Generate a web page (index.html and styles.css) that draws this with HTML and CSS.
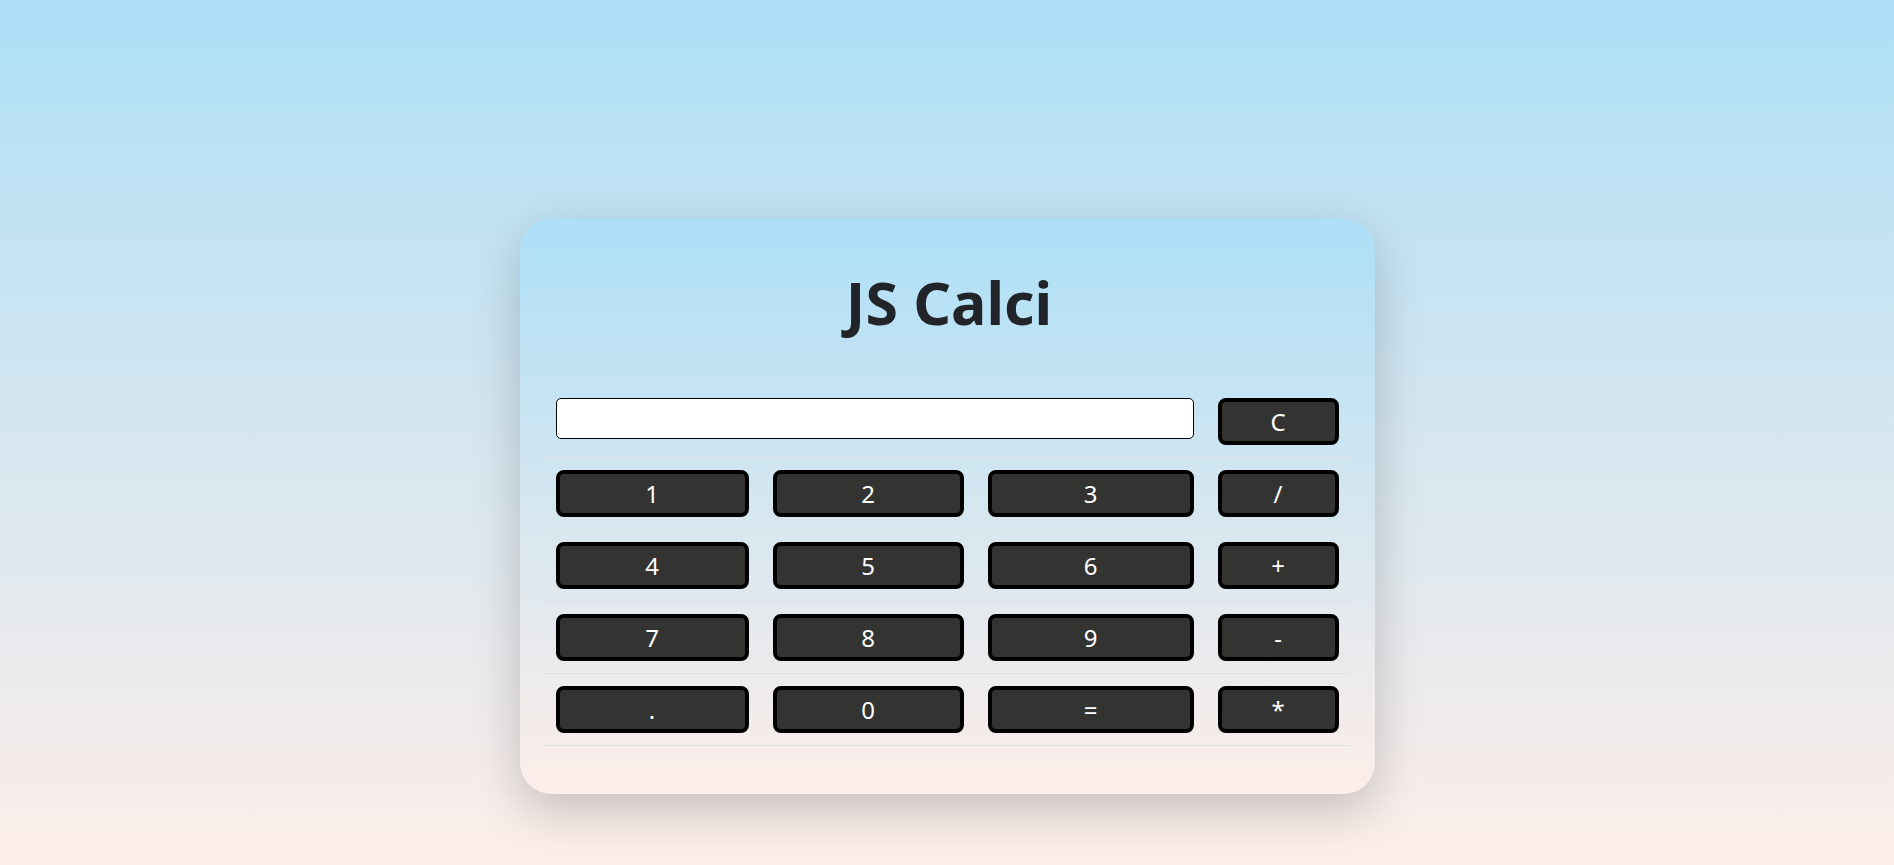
FILE: index.html
```html
<!DOCTYPE html>
<html lang="en">
<head>
<meta charset="utf-8">
<title>JS Calci</title>
<link rel="stylesheet" href="styles.css">
</head>
<body>
<main class="page">
  <section class="calc">
    <h1 class="calc-title">JS Calci</h1>
    <table class="calc-table">
      <colgroup>
        <col class="col-a"><col class="col-b"><col class="col-c"><col class="col-d">
      </colgroup>
      <tbody>
        <tr>
          <td colspan="3"><input class="calc-display" type="text"></td>
          <td><button class="key">C</button></td>
        </tr>
        <tr>
          <td><button class="key">1</button></td>
          <td><button class="key">2</button></td>
          <td><button class="key">3</button></td>
          <td><button class="key">/</button></td>
        </tr>
        <tr>
          <td><button class="key">4</button></td>
          <td><button class="key">5</button></td>
          <td><button class="key">6</button></td>
          <td><button class="key">+</button></td>
        </tr>
        <tr>
          <td><button class="key">7</button></td>
          <td><button class="key">8</button></td>
          <td><button class="key">9</button></td>
          <td><button class="key">-</button></td>
        </tr>
        <tr>
          <td><button class="key">.</button></td>
          <td><button class="key">0</button></td>
          <td><button class="key">=</button></td>
          <td><button class="key">*</button></td>
        </tr>
      </tbody>
    </table>
  </section>
</main>
</body>
</html>
```
FILE: styles.css
```css
html, body {
  margin: 0;
  padding: 0;
}
body {
  min-height: 100vh;
  background: linear-gradient(180deg, #addff7 0%, #fdeee9 100%);
  font-family: "Noto Sans", "Open Sans", "Liberation Sans", sans-serif;
  color: #212529;
}
.page {
  display: flex;
  justify-content: center;
  padding-top: 219px;
  padding-bottom: 71px;
}
.calc {
  width: 855px;
  box-sizing: border-box;
  padding: 48px 24px 48px;
  border-radius: 32px;
  background: linear-gradient(180deg, #addff7 0%, #fdeee9 100%);
  box-shadow: 0 16px 50px rgba(0, 0, 0, 0.2);
}
.calc-title {
  margin: 0 0 48px;
  padding-left: 4px;
  text-align: center;
  font-size: 59px;
  line-height: 71px;
  font-weight: 700;
  color: #212529;
}
.calc-table {
  width: 807px;
  border-collapse: collapse;
  table-layout: fixed;
}
.col-a { width: 217px; }
.col-b { width: 215px; }
.col-c { width: 230px; }
.col-d { width: 145px; }
.calc-table td {
  padding: 12px;
  border-bottom: 1px solid #dee2e6;
  vertical-align: top;
}
.calc-display {
  display: block;
  width: 100%;
  box-sizing: border-box;
  height: 41px;
  margin: 0;
  border: 1px solid #000;
  border-radius: 5px;
  background: #fff;
  font-family: inherit;
  font-size: 20px;
  padding: 0 8px;
}
.key {
  display: block;
  width: 100%;
  height: 47px;
  box-sizing: border-box;
  margin: 0;
  padding: 0;
  border: 4px solid #000;
  border-radius: 8px;
  background: #333331;
  color: #fff;
  font-family: inherit;
  font-size: 24px;
  line-height: 1;
  cursor: pointer;
}
```
